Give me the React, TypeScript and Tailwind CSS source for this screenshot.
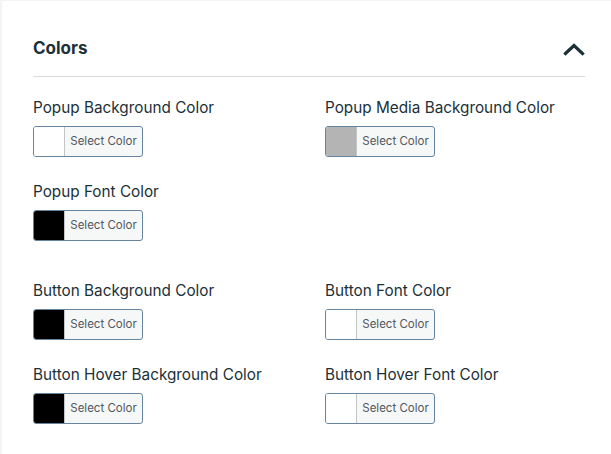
import React from "react";

type Item = { label: string; color: string };

function Picker({ label, color }: Item) {
  return (
    <div className="flex flex-col">
      <div className="text-[15.3px] leading-[20px] text-[#1c3038]">{label}</div>
      <button
        className="mt-[8px] flex h-[31px] w-[110px] items-stretch overflow-hidden rounded-[3px] border border-[#6584a0] bg-[#f6f7f7] p-0"
      >
        <span className="w-[31px] border-r border-[#c3c4c7]" style={{ backgroundColor: color }} />
        <span className="flex flex-1 items-center justify-center text-[11.5px] text-[#50575e]">Select Color</span>
      </button>
    </div>
  );
}

export default function App() {
  return (
    <div
      className="h-[454px] w-[611px] bg-white border-l-2 border-t border-[#f3f4f5]"
      style={{ fontFamily: "Inter, 'Noto Sans', sans-serif" }}
    >
      <div className="pl-[31px] pr-[26px]">
        <div className="flex h-[76px] items-center justify-between pt-[30px] pb-[10px] border-b border-[#dcdcde]">
          <div className="text-[17px] font-bold text-[#1c3038]">Colors</div>
          <svg width="22" height="14" viewBox="0 0 22 14">
            <path d="M2.5 11.5 L11 3.5 L19.5 11.5" fill="none" stroke="#1c3038" strokeWidth="3.2" strokeLinecap="square" />
          </svg>
        </div>
        <div className="grid grid-cols-[292px_1fr] gap-y-[25px] pt-[21px]">
          <Picker label="Popup Background Color" color="#ffffff" />
          <Picker label="Popup Media Background Color" color="#b4b4b4" />
          <Picker label="Popup Font Color" color="#000000" />
          <div />
        </div>
        <div className="grid grid-cols-[292px_1fr] gap-y-[25px] pt-[40px]">
          <Picker label="Button Background Color" color="#000000" />
          <Picker label="Button Font Color" color="#ffffff" />
          <Picker label="Button Hover Background Color" color="#000000" />
          <Picker label="Button Hover Font Color" color="#ffffff" />
        </div>
      </div>
    </div>
  );
}
